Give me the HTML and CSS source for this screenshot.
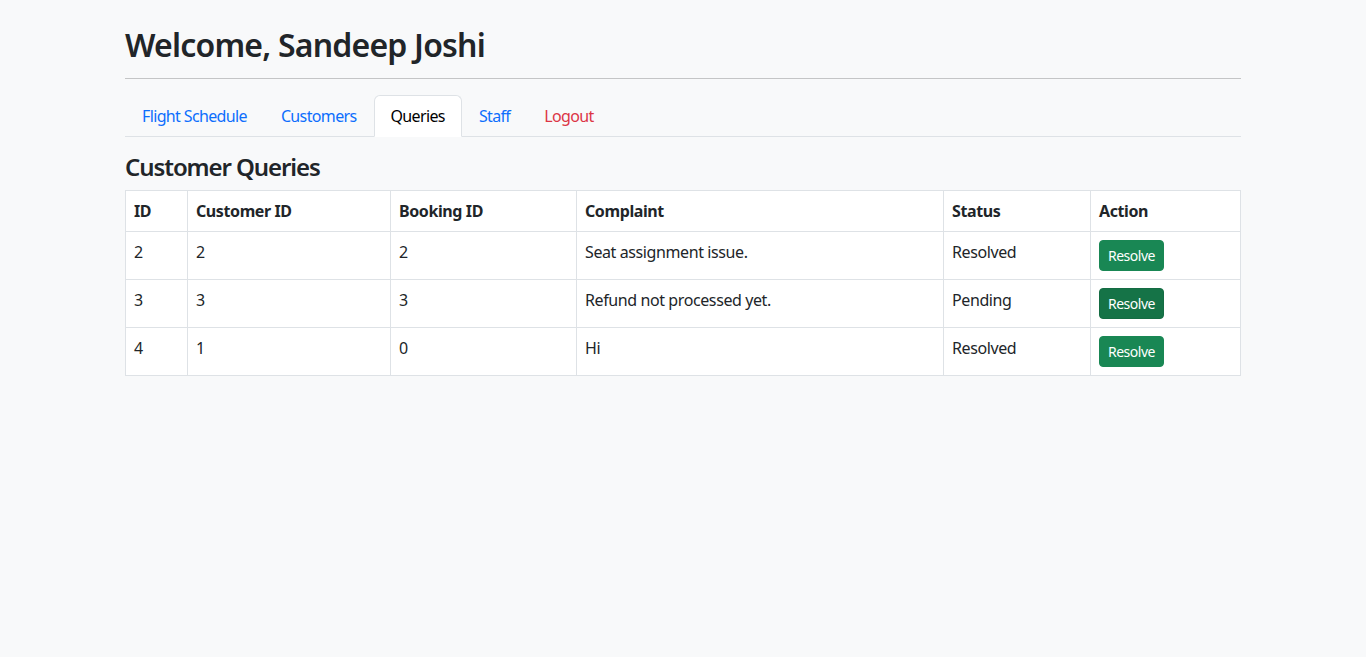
FILE: index.html
```html
<!DOCTYPE html>
<html lang="en">
<head>
<meta charset="utf-8">
<title>Staff Dashboard - Queries</title>
<link rel="stylesheet" href="styles.css">
</head>
<body>
<div class="container">
  <h2 class="welcome">Welcome, Sandeep Joshi</h2>
  <hr class="divider">
  <ul class="tabs">
    <li><a class="tab" href="#">Flight Schedule</a></li>
    <li><a class="tab" href="#">Customers</a></li>
    <li><a class="tab active" href="#">Queries</a></li>
    <li><a class="tab" href="#">Staff</a></li>
    <li><a class="tab danger" href="#">Logout</a></li>
  </ul>
  <h4 class="section-title">Customer Queries</h4>
  <table class="grid">
    <colgroup>
      <col class="c-id">
      <col class="c-cust">
      <col class="c-book">
      <col class="c-comp">
      <col class="c-status">
      <col class="c-action">
    </colgroup>
    <thead>
      <tr><th>ID</th><th>Customer ID</th><th>Booking ID</th><th>Complaint</th><th>Status</th><th>Action</th></tr>
    </thead>
    <tbody>
      <tr><td>2</td><td>2</td><td>2</td><td>Seat assignment issue.</td><td>Resolved</td><td><button class="btn">Resolve</button></td></tr>
      <tr><td>3</td><td>3</td><td>3</td><td>Refund not processed yet.</td><td>Pending</td><td><button class="btn hover">Resolve</button></td></tr>
      <tr><td>4</td><td>1</td><td>0</td><td>Hi</td><td>Resolved</td><td><button class="btn">Resolve</button></td></tr>
    </tbody>
  </table>
</div>
</body>
</html>
```
FILE: styles.css
```css
* { box-sizing: border-box; }
html, body {
  margin: 0;
  background: #f8f9fa;
  color: #212529;
  font-family: "Segoe UI", "Noto Sans", "Open Sans", sans-serif;
  font-size: 16px;
  line-height: 1.5;
  letter-spacing: -0.025em;
}
.container {
  width: 1140px;
  margin: 0 auto;
  padding: 0 12px;
}
.welcome {
  margin: 26px 0 0;
  font-size: 32px;
  font-weight: 600;
  line-height: 1.2;
  letter-spacing: -0.025em;
}
.divider {
  margin: 14px 0 16px;
  border: 0;
  border-top: 1px solid #c4c5c6;
  height: 0;
}
.tabs {
  display: flex;
  list-style: none;
  margin: 0;
  padding: 0;
  border-bottom: 1px solid #dee2e6;
}
.tabs li { margin-bottom: -1px; }
.tab {
  display: block;
  padding: 8px 16px;
  color: #0d6efd;
  text-decoration: none;
  letter-spacing: -0.04em;
  border: 1px solid transparent;
  border-top-left-radius: 6px;
  border-top-right-radius: 6px;
}
.tab.active {
  color: #000;
  background: #fff;
  border-color: #dee2e6 #dee2e6 #fff;
}
.tab.danger { color: #dc3545; }
.section-title {
  margin: 16px 0 8px;
  font-size: 24px;
  font-weight: 600;
  line-height: 1.2;
  letter-spacing: -0.045em;
}
.grid {
  width: 1115px;
  table-layout: fixed;
  border-collapse: collapse;
  background: #fff;
  vertical-align: top;
}
.grid th, .grid td {
  border: 1px solid #dee2e6;
  padding: 8px;
  text-align: left;
  vertical-align: top;
}
.grid th { font-weight: 700; }
.c-id { width: 62px; }
.c-cust { width: 203px; }
.c-book { width: 186px; }
.c-comp { width: 367px; }
.c-status { width: 147px; }
.c-action { width: 150px; }
.btn {
  font-family: inherit;
  font-size: 14px;
  line-height: 1.5;
  letter-spacing: -0.035em;
  padding: 4px 8px;
  border: 1px solid #198754;
  border-radius: 4px;
  background: #198754;
  color: #fff;
  cursor: pointer;
}
.btn.hover { background: #157347; border-color: #146c43; }
```
